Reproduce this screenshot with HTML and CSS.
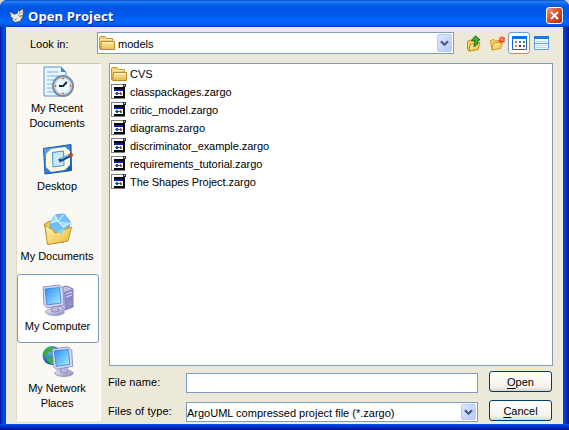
FILE: index.html
```html
<!DOCTYPE html>
<html lang="en">
<head>
<meta charset="utf-8">
<title>Open Project</title>
<link rel="stylesheet" href="styles.css">
</head>
<body>
<svg class="defs" width="0" height="0" aria-hidden="true">
  <defs>
    <linearGradient id="gold" x1="0" y1="0" x2="1" y2="1"><stop offset="0" stop-color="#fff6b8"/><stop offset="1" stop-color="#efb92f"/></linearGradient>
    <linearGradient id="manila" x1="0" y1="0" x2="0" y2="1"><stop offset="0" stop-color="#fff0a8"/><stop offset="1" stop-color="#e8b84a"/></linearGradient>
    <linearGradient id="screen" x1="0" y1="0" x2="1" y2="1"><stop offset="0" stop-color="#2b8df5"/><stop offset="1" stop-color="#a9f0ff"/></linearGradient>
    <linearGradient id="blue" x1="0" y1="0" x2="1" y2="1"><stop offset="0" stop-color="#63b4f4"/><stop offset="1" stop-color="#0b4fb4"/></linearGradient>
    <linearGradient id="metal" x1="0" y1="0" x2="1" y2="1"><stop offset="0" stop-color="#f4f4ff"/><stop offset="1" stop-color="#8583bd"/></linearGradient>
    <radialGradient id="globe" cx=".35" cy=".3" r=".75"><stop offset="0" stop-color="#67b9fb"/><stop offset="1" stop-color="#0a3da8"/></radialGradient>
    <symbol id="folder" viewBox="0 0 16 16">
      <path d="M.5 13.5V2.500L1.500 1.500H6L7.500 3.500H13.500V13.500Z" fill="#f3cf70" stroke="#c8962e"/>
      <path d="M1.500 4.500H12.500" stroke="#fff3b4"/>
      <path d="M2.500 6.500H15.500V14.500H1.500Z" fill="url(#manila)" stroke="#b98a2c"/>
      <path d="M3.500 7.500H14.500" stroke="#fffbd5"/>
    </symbol>
    <symbol id="zargo" viewBox="0 0 16 16" shape-rendering="crispEdges">
      <path d="M1 1H12V4H14V15H1Z" fill="#fff"/>
      <path d="M0 0H12V1H1V15H0Z" fill="#808080"/>
      <path d="M12 0H15V3H12Z" fill="#333"/>
      <path d="M13 1H14V2H13Z" fill="#ddd"/>
      <path d="M3 3H14V14H3Z" fill="#000"/>
      <path d="M3 5H12V7H3Z" fill="#0a1aa8"/>
      <path d="M3 7H12V12H3Z" fill="#fff"/>
      <path d="M5 8H7V11H5ZM4 9H8V10H4Z" fill="#2348d8"/>
      <path d="M9 8H10V9H9ZM8 9H11V10H8Z" fill="#d8222b"/>
      <path d="M9 10H11V11H9Z" fill="#22963a"/>
      <path d="M1 14H14V15H1Z" fill="#808080"/>
    </symbol>
    <symbol id="monitor" viewBox="0 0 24 32">
      <ellipse cx="13" cy="28" rx="9.500" ry="3.500" fill="url(#metal)" stroke="#8886b8" stroke-width=".7"/>
      <path d="M10 20L16 20L17 27Q13 29 9 27Z" fill="#b9b7df" stroke="#7774ad" stroke-width=".6"/>
      <path d="M1 3L17 1L21 4L22 21L5 24L2 21Z" fill="#d5d8f0" stroke="#7880b2" stroke-width=".8"/>
      <path d="M3 5L17.500 3.500L19 19L5 21Z" fill="url(#screen)" stroke="#397bcf" stroke-width=".8"/>
    </symbol>
    <symbol id="chevron" viewBox="0 0 9 7"><path d="M1 1.300L4.500 4.800L8 1.300" fill="none" stroke="#435b89" stroke-width="2.200"/></symbol>
  </defs>
</svg>
<div class="window">
  <header class="titlebar">
    <svg class="logo" viewBox="0 0 18 17"><path d="M.8 4L7 7.200L10 6L10.300 3L12.500 4L15.500 1L16.500 5L15.500 10L13 14.500L8 16L4.500 14L5 11.500L2.500 9.500L3 8Z" fill="#e9e7e3" stroke="#333" stroke-width=".7"/><path d="M11.500 6H13M14.300 5.500H15M11 8L12.500 9.500L15 8.500M7 13.500L9 12" fill="none" stroke="#333" stroke-width=".8"/></svg>
    <h1>Open Project</h1>
    <button class="close" aria-label="Close"><svg viewBox="0 0 13 13"><path d="M3 3L10 10M10 3L3 10" stroke="#fff" stroke-width="2"/></svg></button>
  </header>
  <main class="dialog">
    <div class="lookbar">
      <label class="look-label">Look in:</label>
      <div class="combo look-combo"><svg class="i16"><use href="#folder"/></svg><span class="look-value">models</span><span class="arrow"><svg><use href="#chevron"/></svg></span></div>
      <div class="tools">
        <svg class="tool up" viewBox="0 0 16 17"><path d="M1.500 6.500L5 5L6.500 6.500L11 5.500L11 14L3 16L1.500 14Z" fill="#f7d465" stroke="#bd8b18"/><path d="M4 9.500L14 7.500L12 14.500L3 16Z" fill="url(#gold)" stroke="#bd8b18"/><path d="M9.500 .8L14 5H12Q12.500 10 8 11.500Q9.500 8 8.500 5.300H5.500Z" fill="#3fb62e" stroke="#146b16"/></svg>
        <svg class="tool fresh" viewBox="0 0 16 17"><path d="M1.500 5.500L5 4.500L6.500 6L11 5.500L11 12L3 15Z" fill="#f7d465" stroke="#d09d25"/><path d="M4.500 8L13.500 7L11.500 13.500L3 15Z" fill="url(#gold)" stroke="#d09d25"/><path d="M13 .8L14.200 2.300L16 2.500L15.500 4.800L16 7L13.800 7.300L12 9L11 7L9 6L10.500 4L10.500 2L12.300 2.500Z" fill="#f84b25"/><circle cx="13" cy="4.800" r="1.200" fill="#ffad6b"/></svg>
        <span class="selected"><svg viewBox="0 0 15 15"><path d="M.5 .5H14.500V13.500H.5Z" fill="#fffdf5" stroke="#1767ca"/><path d="M0 0H15V3H0Z" fill="#176fe0"/><path d="M3 5H5V7H3Z" fill="#9a7a8c"/><path d="M7 5H9V7H7Z" fill="#6d87ba"/><path d="M11 5H13V7H11Z" fill="#25973d"/><path d="M3 9H5V11H3Z" fill="#f0824e"/><path d="M7 9H9V11H7Z" fill="#16429c"/><path d="M11 9H13V11H11Z" fill="#a34242"/></svg></span>
        <svg class="tool details" viewBox="0 0 15 15"><path d="M.5 .5H14.500V13.500H.5Z" fill="#f5faff" stroke="#5b9de2"/><path d="M0 0H15V3H0Z" fill="#1b78e4"/><path d="M2 5.500H13M2 9.500H13M2 11.500H13" stroke="#bdd5ea"/><path d="M1 7.500H14" stroke="#6d9bc7"/></svg>
      </div>
    </div>
    <div class="body">
      <nav class="places">
        <a class="place"><svg viewBox="0 0 32 33">
          <path d="M2 1H19L24 6V30H2Z" fill="#eaf5ff" stroke="#5794d6"/><path d="M19 1V6H24Z" fill="#3c8ae0"/><path d="M5 6H16M5 10H19M5 14H15M5 18H13M5 22H13M5 26H13" stroke="#9bc9f3" stroke-width="1.500"/>
          <circle cx="21" cy="20" r="10" fill="#dce9f1" stroke="#798e9d" stroke-width="2"/><circle cx="21" cy="20" r="8" fill="#e9f8ff" stroke="#b5cad7"/><path d="M21 20L25 16M22 20H17" stroke="#18252f" stroke-width="1.800"/><path d="M20 12.500H22M20 27.500H22M13.500 19V21M28.500 19V21" stroke="#f06625" stroke-width="1.700"/></svg><span>My Recent<br>Documents</span></a>
        <a class="place"><svg viewBox="0 0 32 33"><path d="M1.500 5.500L29 1.500L29.500 27.500L3 31Z" fill="url(#blue)" stroke="#145bb2"/><path d="M9 6L23 4L28 8V22L23 27L9 29L4 24V11Z" fill="#fff9d8"/><path d="M10.500 9.500L21.500 8L22 22.500L11 24Z" fill="#c9e8fb" stroke="#3e91dc"/><path d="M17 18L28 12.500" stroke="#174c86" stroke-width="3.500"/><path d="M19 16L27 12" stroke="#83c8f5" stroke-width="1.300"/><circle cx="29" cy="12" r="2" fill="#cf3528"/></svg><span>Desktop</span></a>
        <a class="place"><svg viewBox="0 0 32 33"><path d="M2.500 11L8 8L11 10L27 12L22 29L6 31Z" fill="#f6cf57" stroke="#b88520"/><path d="M8 10L13 2L22 .8L29 10L19 25L9 19Z" fill="#75bff2" stroke="#4a8ecb" stroke-width=".7"/><path d="M8 10L16 8L13 2M16 8L22 1M16 8L21 14L29 10" fill="#aae0ff" stroke="#e3f7ff"/><path d="M3 12L11 17L13 20L29.500 14L26 28L5.500 31.500Z" fill="url(#gold)" stroke="#c69429"/><path d="M15 18L23 15L19 22Z" fill="#83d6f4"/></svg><span>My Documents</span></a>
        <a class="place active"><svg viewBox="0 0 32 33"><path d="M17 4L25 2L31 5V23L23 26L17 22Z" fill="#c3c0e8" stroke="#7773b1"/><path d="M22 8L31 5V23L23 26Z" fill="#8d89c8"/><path d="M24 10L30 8M24 13L30 11" stroke="#dcdcf8"/><circle cx="28" cy="20" r="1" fill="#62dd65"/><use href="#monitor" x="0" y="0" width="24" height="32"/></svg><span>My Computer</span></a>
        <a class="place network"><svg viewBox="0 0 32 33"><circle cx="10" cy="10.500" r="9.500" fill="url(#globe)"/><path d="M3 5Q8 0 12 2L10 6L6 8L4 12L1 10ZM4 13L9 12L13 15L10 20Q6 18 4 13Z" fill="#39b23d"/><use href="#monitor" x="9" y="1" width="24" height="31"/></svg><span>My Network<br>Places</span></a>
      </nav>
      <section class="content">
        <ul class="files">
          <li><svg class="i16"><use href="#folder"/></svg>CVS</li>
          <li><svg class="i16"><use href="#zargo"/></svg>classpackages.zargo</li>
          <li><svg class="i16"><use href="#zargo"/></svg>critic_model.zargo</li>
          <li><svg class="i16"><use href="#zargo"/></svg>diagrams.zargo</li>
          <li><svg class="i16"><use href="#zargo"/></svg>discriminator_example.zargo</li>
          <li><svg class="i16"><use href="#zargo"/></svg>requirements_tutorial.zargo</li>
          <li><svg class="i16"><use href="#zargo"/></svg>The Shapes Project.zargo</li>
        </ul>
        <div class="form">
          <label>File name:</label><div class="input"></div><button class="push"><span><u>O</u>pen</span></button>
          <label>Files of type:</label><div class="combo type-combo"><span class="type-value">ArgoUML compressed project file (*.zargo)</span><span class="arrow"><svg><use href="#chevron"/></svg></span></div><button class="push"><span><u>C</u>ancel</span></button>
        </div>
      </section>
    </div>
  </main>
</div>
</body>
</html>
```
FILE: styles.css
```css
* { box-sizing: border-box; }
body { margin: 0; background: #d8d5cb; font: 11px/15px "Liberation Sans", Arial, sans-serif; color: #000; overflow: hidden; }
svg { display: block; flex-shrink: 0; }
.defs { position: absolute; }
.window { width: 569px; height: 430px; padding: 0 6px 6px; border-radius: 7px 7px 0 0; background: linear-gradient(#0753ec 0, #0746df 1px, #0030c5 3px, #00128a 6px) bottom / 100% 6px no-repeat, linear-gradient(90deg, #001ba0, #0036d5 2px, #0753ec 4px, #003bdc 6px, #0646e4 563px, #0032c8 566px, #00138c); }
.titlebar { height: 27px; margin: 0 -6px; padding: 4px 6px 0 8px; display: flex; align-items: center; border-radius: 7px 7px 0 0; background: linear-gradient(#0a4fcb 0, #2a83fa 2px, #0765ed 4px, #0054e3 8px, #0058e9 14px, #0066ff 22px, #0056e8 25px, #003dc2 27px); }
.logo { width: 17px; height: 17px; }
h1 { margin: 0 auto 0 3px; font: bold 13px/20px "Open Sans", sans-serif; letter-spacing: .1px; color: #fff; text-shadow: 1px 1px #0b2a8c; }
.close { width: 17px; height: 17px; padding: 1px; border: 1px solid #fff; border-radius: 3px; background: linear-gradient(135deg, #ef9b80, #dc502c 45%, #b52e0c); }
.close svg { width: 13px; height: 13px; }
.dialog { height: 397px; padding: 5px 10px 0; background: #ece9d8; }
.lookbar { display: flex; height: 31px; align-items: flex-start; }
.look-label { width: 81px; padding: 5px 0 0 14px; }
.combo, .input { height: 20px; border: 1px solid #7f9db9; background: #fff; }
.combo { display: flex; align-items: center; padding-right: 1px; }
.look-combo { width: 357px; height: 22px; padding-left: 1px; }
.look-value { padding: 2px 0 0 3px; }
.i16 { width: 16px; height: 16px; }
.arrow { width: 15px; align-self: stretch; margin: 1px 0 1px auto; display: grid; place-items: center; border: 1px solid #b9cbf3; border-radius: 2px; background: linear-gradient(135deg, #dce6ff, #b7cbf7); }
.arrow svg { width: 9px; height: 7px; }
.tools { display: flex; align-items: center; margin-left: 12px; height: 22px; }
.tool { width: 16px; height: 17px; }
.fresh { margin-left: 7px; }
.selected { width: 22px; height: 22px; margin-left: 3px; display: grid; place-items: center; border: 1px solid #7b9ebd; border-radius: 3px; background: #fff; }
.selected svg, .details { width: 15px; height: 15px; }
.details { margin-left: 4px; }
.body { display: flex; gap: 8px; }
.places { width: 85px; height: 358px; padding-right: 1px; border: 1px solid #d5d2c3; border-color: #c9c6b9 #fff #fff #dedbce; background: #f9f8f3; }
.place { height: 70px; display: flex; flex-direction: column; align-items: center; gap: 3px; padding: 9px 2px 0 0; text-align: center; letter-spacing: -.05px; white-space: nowrap; }
.place:first-child { padding-top: 2px; gap: 2px; }
.place svg { width: 32px; height: 33px; margin-left: 1px; }
.place.active { height: 69px; gap: 2px; padding-right: 1px; border: 1px solid #7b9ebd; border-radius: 3px; background: #fff; }
.place.network { padding-top: 2px; gap: 3px; }
.content { width: 444px; }
.files { height: 303px; margin: 0; padding: 1px; list-style: none; border: 1px solid #7f9db9; background: #fff; letter-spacing: -.06px; }
.files li { height: 18px; display: flex; align-items: center; gap: 3px; }
.form { display: grid; grid-template-columns: 77px 292px 63px; grid-template-rows: 21px 21px; gap: 8px 0; padding-top: 5px; align-items: center; }
.form label { margin-left: -1px; padding-top: 1px; line-height: 20px; letter-spacing: .1px; }
.form label:nth-of-type(2) { padding-top: 0; }
.form .input, .form .combo { align-self: end; transform: translateY(1px); }
.push { height: 21px; width: 63px; margin-left: 11px; padding: 2px 0 0; border: 1px solid #003c74; border-radius: 3px; font: inherit; background: linear-gradient(#fff, #f3f2eb 80%, #d9d5c6); }
.type-value { padding-top: 2px; }
u { text-underline-offset: 2px; }
```
